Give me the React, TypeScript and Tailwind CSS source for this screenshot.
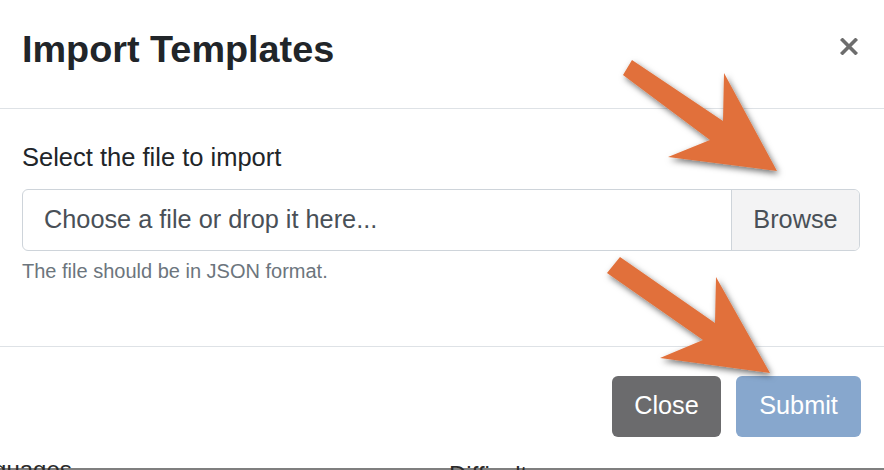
import React from 'react';

const Arrows: React.FC = () => (
  <svg
    className="pointer-events-none absolute inset-0"
    width="884"
    height="470"
    viewBox="0 0 884 470"
  >
    <defs>
      <filter id="arrowShadow" x="-20%" y="-20%" width="140%" height="140%">
        <feDropShadow dx="2" dy="3" stdDeviation="3" floodColor="#000" floodOpacity="0.55" />
      </filter>
    </defs>
    <g fill="#e1703a" filter="url(#arrowShadow)">
      <polygon points="632,60 723,121 724,73 777,171 668,157 710,140 623,75" />
      <polygon points="620,257 715,323 716,277 770,373 660,358 703,340 607,273" />
    </g>
  </svg>
);

export default function App() {
  return (
    <div className="relative h-[470px] w-[884px] overflow-hidden bg-white font-['Liberation_Sans',Arial,sans-serif]">
      <div className="flex flex-col">
        {/* header */}
        <div className="flex items-start justify-between border-b border-[#dee2e6] pl-[22px] pr-[26px] pt-[27px] pb-[36px]">
          <h4 className="text-[37.8px] font-bold leading-[1.2] text-[#212529]">Import Templates</h4>
          <button className="mt-[10px] flex h-[18px] w-[18px] items-center justify-center">
            <svg width="18" height="17" viewBox="0 0 18 17">
              <path d="M2.5 2 L15.5 15 M15.5 2 L2.5 15" stroke="#6d6d6d" strokeWidth="3.6" strokeLinecap="square" />
            </svg>
          </button>
        </div>

        {/* body */}
        <div className="flex flex-col pl-[22px] pr-[24px] pt-[29px] pb-[60px]">
          <label className="text-[25.5px] leading-[1.5] text-[#212529]">Select the file to import</label>
          <div className="mt-[12px] flex h-[62px] overflow-hidden rounded-[6px] border border-[#ced4da]">
            <div className="flex flex-1 items-center pl-[21px] text-[25.3px] text-[#495057]">
              Choose a file or drop it here...
            </div>
            <div className="flex w-[128px] items-center justify-center border-l border-[#ced4da] bg-[#f3f3f4] text-[25.3px] text-[#495057]">
              Browse
            </div>
          </div>
          <p className="mt-[5px] text-[20px] leading-[1.5] text-[#6c757d]">The file should be in JSON format.</p>
        </div>

        {/* footer */}
        <div className="flex justify-end gap-[15px] border-t border-[#dee2e6] pr-[23px] pt-[29px] pb-[28px]">
          <button className="flex h-[61px] w-[109px] items-center justify-center rounded-[6px] bg-[#6b6b6d] text-[25.3px] text-white">
            Close
          </button>
          <button className="flex h-[61px] w-[125px] items-center justify-center rounded-[6px] bg-[#87a7cd] text-[25.3px] text-white">
            Submit
          </button>
        </div>

        {/* page behind the modal */}
        <div className="relative h-[8px] overflow-hidden">
          <div className="h-[3px] bg-white" />
          <div className="h-[5px] bg-[#7f7f7f]" />
          <div className="absolute left-0 top-[-2px] flex w-full items-start text-[24px] leading-none text-[#2a2a2a]">
            <span className="ml-[-47px] mt-[-5px] w-[496px]">Languages</span>
            <span>Difficulty</span>
          </div>
        </div>
      </div>

      <Arrows />
    </div>
  );
}
